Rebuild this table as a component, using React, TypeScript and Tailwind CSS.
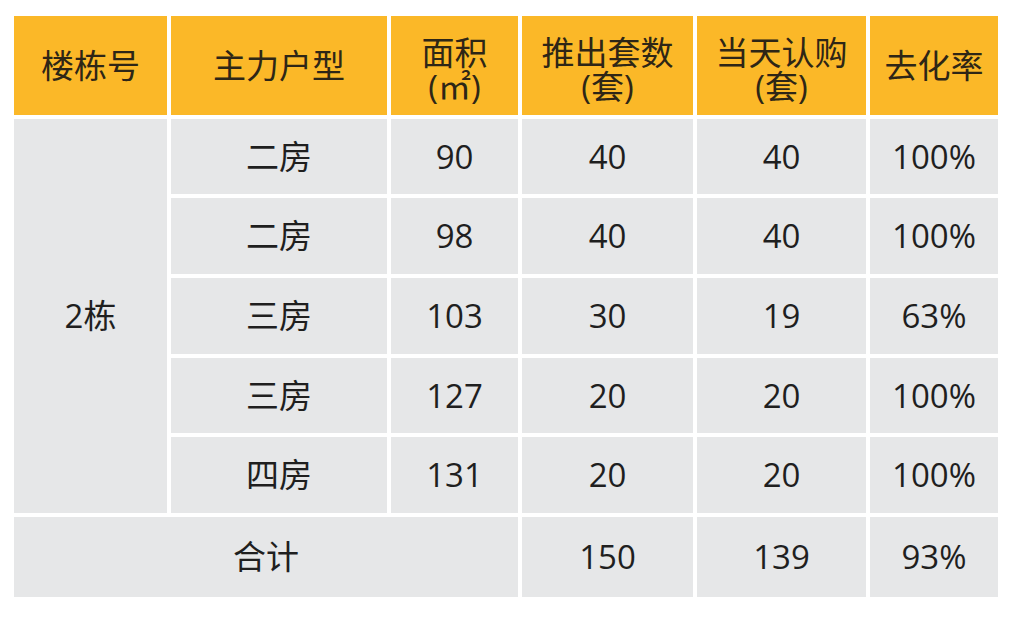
import React from 'react'

const rows = [
  { type: '二房', area: '90', out: '40', sold: '40', rate: '100%' },
  { type: '二房', area: '98', out: '40', sold: '40', rate: '100%' },
  { type: '三房', area: '103', out: '30', sold: '19', rate: '63%' },
  { type: '三房', area: '127', out: '20', sold: '20', rate: '100%' },
  { type: '四房', area: '131', out: '20', sold: '20', rate: '100%' },
]

const head = 'bg-[#fbb828] text-[#2e2616] flex items-center justify-center text-center leading-[34px]'
const cell = 'bg-[#e6e7e8] text-[#1f1f1f] flex items-center justify-center'

const App = () => {
  return (
    <div
      className="w-[1010px] h-[622px] bg-white pt-[16px] pl-[14px]"
      style={{ fontFamily: '"Open Sans", "Noto Sans CJK SC", sans-serif' }}
    >
      <div className="grid grid-cols-[153px_216px_127px_171px_169px_128px] grid-rows-[99px_75px_76px_76px_75px_76px_80px] gap-[4px] text-[33px]">
        <div className={head}>楼栋号</div>
        <div className={head}>主力户型</div>
        <div className={`${head} pt-[8px]`}>
          <span>面积<br />(㎡)</span>
        </div>
        <div className={`${head} pt-[8px]`}>
          <span>推出套数<br />(套)</span>
        </div>
        <div className={`${head} pt-[8px]`}>
          <span>当天认购<br />(套)</span>
        </div>
        <div className={head}>去化率</div>

        <div className={`${cell} row-span-5`}>2栋</div>
        {rows.map((r, i) => (
          <React.Fragment key={i}>
            <div className={`${cell} col-start-2`}>{r.type}</div>
            <div className={cell}>{r.area}</div>
            <div className={cell}>{r.out}</div>
            <div className={cell}>{r.sold}</div>
            <div className={cell}>{r.rate}</div>
          </React.Fragment>
        ))}

        <div className={`${cell} col-span-3`}>合计</div>
        <div className={cell}>150</div>
        <div className={cell}>139</div>
        <div className={cell}>93%</div>
      </div>
    </div>
  )
}

export default App
